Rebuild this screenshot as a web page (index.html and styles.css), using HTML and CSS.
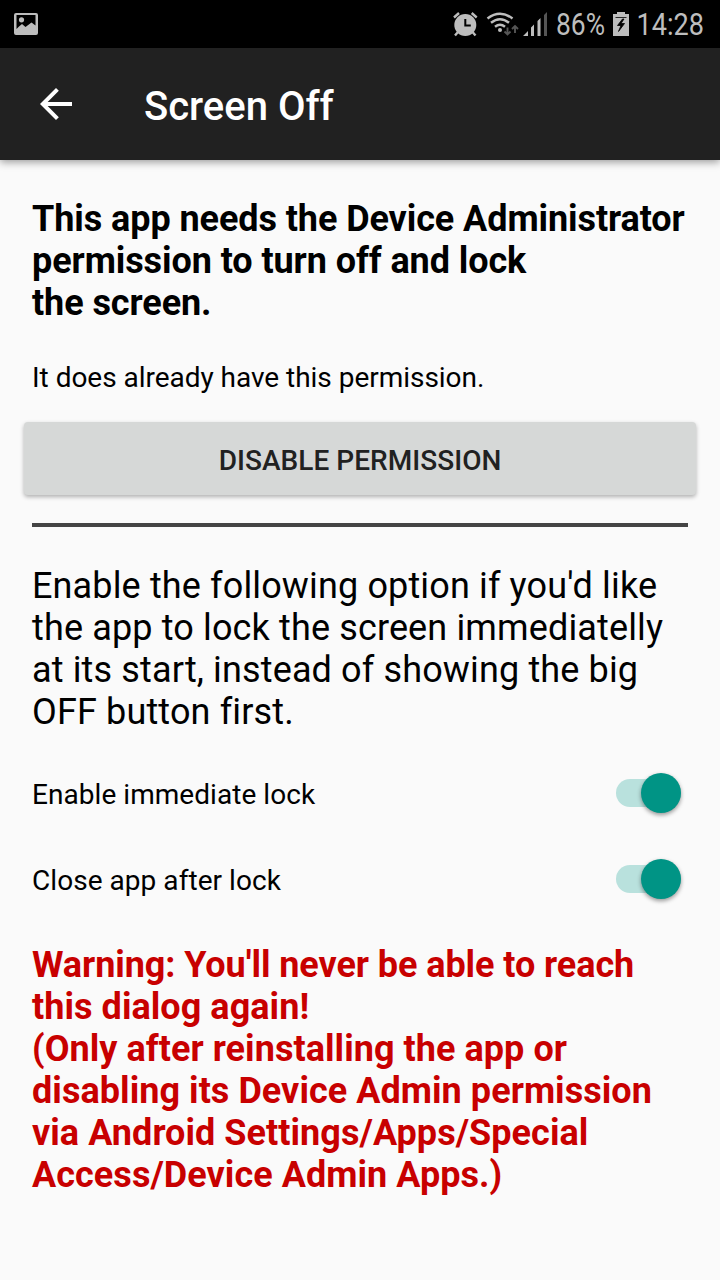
FILE: index.html
```html
<!DOCTYPE html>
<html lang="en">
<head>
<meta charset="utf-8">
<title>Screen Off</title>
<link rel="stylesheet" href="styles.css">
</head>
<body>
<div class="status">
  <svg class="picture" width="24" height="24" viewBox="0 0 24 24"><path fill="#bdbdbd" fill-rule="evenodd" d="M2 1H22Q24 1 24 3V21Q24 23 22 23H2Q0 23 0 21V3Q0 1 2 1zM2.500 3V17L5 14.500 8 12 11.500 15 17.500 10.500 21.500 13.500V3z"/><circle cx="7.500" cy="7.800" r="2.600" fill="#bdbdbd"/></svg>
  <svg class="indicators" width="264" height="48" viewBox="450 0 264 48">
    <circle cx="465.300" cy="25" r="11" fill="#bdbdbd"/>
    <path d="M465.300 19v6.500h5.500" fill="none" stroke="#000" stroke-width="2"/>
    <path d="M454 17.500l5-4.500M471.700 13l5 4.500M458 32l-3 3.500M472.500 32l3 3.500" fill="none" stroke="#bdbdbd" stroke-width="2.400"/>
    <path d="M487.500 18.500q12.500-9.500 25 0M491 22.800q9-7 18 0M495 26.800q5-4 10 0" fill="none" stroke="#bdbdbd" stroke-width="2.500"/>
    <circle cx="500" cy="30" r="2" fill="#bdbdbd"/>
    <path d="M507.500 27.500v7M504.500 31.500l3 3 3-3M515 33v-7M512 29l3-3 3 3" fill="none" stroke="#555" stroke-width="1.900"/>
    <path d="M523 36l5-5v5zM531 36v-8.500l3-3V36zM537.500 36V21l3-3V36z" fill="#bdbdbd"/>
    <path d="M544 36V15l3-3V36z" fill="#555"/>
    <path d="M613 14h4v-2h8v2h4v22h-16z" fill="#bdbdbd"/>
    <path d="M615.500 17.500h11M622.500 19l-5 6.500h3.500l-2.500 6 6-8h-3.500l3-4.500z" fill="#000" stroke="#000" stroke-width=".8"/>
    <text class="reading" x="556" y="35" textLength="49" lengthAdjust="spacingAndGlyphs">86%</text>
    <text class="reading" x="636.500" y="35" textLength="67.500" lengthAdjust="spacingAndGlyphs">14:28</text>
  </svg>
</div>
<header class="bar">
  <svg class="back" width="48" height="48" viewBox="0 0 24 24"><path fill="#fff" d="M20 11H7.830l5.590-5.590L12 4l-8 8 8 8 1.410-1.410L7.830 13H20z"/></svg>
  <h1>Screen Off</h1>
</header>
<main>
  <h2 class="lead">This app needs the Device Administrator permission to turn off and lock<br>the screen.</h2>
  <p class="note">It does already have this permission.</p>
  <button class="button">DISABLE PERMISSION</button>
  <hr class="rule">
  <p class="description">Enable the following option if you'd like<br>the app to lock the screen immediatelly<br>at its start, instead of showing the big<br>OFF button first.</p>
  <div class="row"><span class="label">Enable immediate lock</span><span class="switch"></span></div>
  <div class="row"><span class="label">Close app after lock</span><span class="switch"></span></div>
  <p class="warning"><span class="opening">Warning: You'll never be able to reach</span><br>this dialog again!<br>(Only after reinstalling the app or<br>disabling its Device Admin permission<br>via Android Settings/Apps/Special<br>Access/Device Admin Apps.)</p>
</main>
</body>
</html>
```
FILE: styles.css
```css
* { box-sizing: border-box; }
body { margin: 0; width: 720px; height: 1280px; overflow: hidden; background: #fafafa; color: #000; font-family: Roboto, sans-serif; }
h1, h2, p { margin: 0; }
.status { height: 48px; background: #000; display: flex; align-items: center; justify-content: space-between; padding: 0 6px 0 14px; }
.reading { font: 400 30.5px Roboto, sans-serif; fill: #bdbdbd; }
.bar { height: 112px; background: #212121; display: flex; align-items: center; padding-left: 32px; box-shadow: 0 2px 8px rgba(0,0,0,.4); }
.bar h1 { margin-left: 64px; color: #fff; font-size: 40px; font-weight: 500; line-height: 48px; padding-top: 5px; }
main { padding: 38px 32px 0; }
.lead, .description, .warning { font-size: 36px; line-height: 42px; white-space: nowrap; }
.lead, .warning { font-weight: 700; }
.lead { letter-spacing: -.08px; white-space: normal; }
.description { letter-spacing: .14px; }
.note { font-size: 28px; line-height: 33px; margin-top: 37px; letter-spacing: -.03px; }
.button { display: block; width: 672px; height: 73px; margin: 28px -8px 0; padding: 4px 0 0; border: 0; border-radius: 4px; background: #d6d8d7; font: 500 28px Roboto, sans-serif; letter-spacing: .04px; color: #212121; box-shadow: 0 2px 4px rgba(0,0,0,.3); }
.rule { height: 4px; border: 0; background: #444; margin: 28px 0 38px; }
.row { height: 54px; margin-top: 32px; display: flex; justify-content: space-between; align-items: center; font-size: 28px; }
.description + .row { margin-top: 33px; }
.label { padding-top: 2px; letter-spacing: .05px; }
.switch { width: 65px; height: 28px; border-radius: 14px; background: #b9e1dd; margin-right: 7px; display: flex; align-items: center; justify-content: flex-end; }
.switch::after { content: ""; width: 40px; height: 40px; flex: none; border-radius: 50%; background: #009485; box-shadow: 0 2px 4px rgba(0,0,0,.4); }
.warning { margin-top: 38px; color: #c80000; letter-spacing: .05px; }
.opening { letter-spacing: -.07px; }
```
